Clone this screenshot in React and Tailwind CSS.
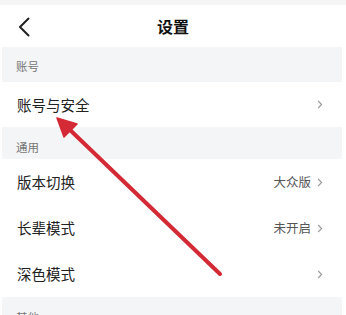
import React from "react";

const font = { fontFamily: '"Noto Sans CJK SC", "Noto Sans", sans-serif' };

function Chevron() {
  return (
    <svg width="6" height="9" viewBox="0 0 6 9" className="ml-[6px]">
      <path d="M1.2 1 L4.6 4.5 L1.2 8" fill="none" stroke="#9a9a9a" strokeWidth="1.1" />
    </svg>
  );
}

function Row({ label, value }) {
  return (
    <div className="h-[46px] flex items-center justify-between pl-[15px] pr-[19px] bg-white">
      <span className="text-[14.5px] text-[#222]">{label}</span>
      <div className="flex items-center">
        {value && <span className="text-[12.5px] text-[#555]">{value}</span>}
        <Chevron />
      </div>
    </div>
  );
}

export default function App() {
  return (
    <div className="relative w-[346px] h-[315px] overflow-hidden bg-white" style={font}>
      <div className="h-[5px] bg-[#f5f5f5]" />
      <div className="pl-[2px] pr-[4px]">
        <div className="h-[42px] relative flex items-center justify-center bg-white">
          <svg className="absolute left-[15px] top-[12px]" width="14" height="20" viewBox="0 0 14 20">
            <path d="M11.5 1.5 L3 10 L11.5 18.5" fill="none" stroke="#222" strokeWidth="2" strokeLinecap="round" strokeLinejoin="round" />
          </svg>
          <span className="text-[16px] font-semibold text-[#111] ml-[2px]">设置</span>
        </div>
        <div className="h-[35px] bg-[#f4f5f6] flex items-center pl-[14px] pt-[5px]">
          <span className="text-[11.5px] text-[#777]">账号</span>
        </div>
        <div className="h-[45px] flex items-center justify-between pl-[15px] pr-[19px] bg-white">
          <span className="text-[14.5px] text-[#222]">账号与安全</span>
          <Chevron />
        </div>
        <div className="h-[32px] bg-[#f4f5f6] flex items-center pl-[14px] pt-[10px]">
          <span className="text-[11.5px] text-[#777]">通用</span>
        </div>
        <Row label="版本切换" value="大众版" />
        <Row label="长辈模式" value="未开启" />
        <Row label="深色模式" />
        <div className="h-[30px] bg-[#f4f5f6] pl-[14px] pt-[12px]">
          <span className="block text-[11.5px] leading-[16px] text-[#777]">其他</span>
        </div>
      </div>
      <svg className="absolute left-0 top-0 pointer-events-none" width="346" height="315" viewBox="0 0 346 315">
        <line x1="220" y1="274" x2="68" y2="128" stroke="#d42a35" strokeWidth="4" strokeLinecap="round" />
        <polygon points="57,118 77,124 64,137" fill="#d42a35" stroke="#d42a35" strokeWidth="1.5" strokeLinejoin="round" />
      </svg>
    </div>
  );
}
